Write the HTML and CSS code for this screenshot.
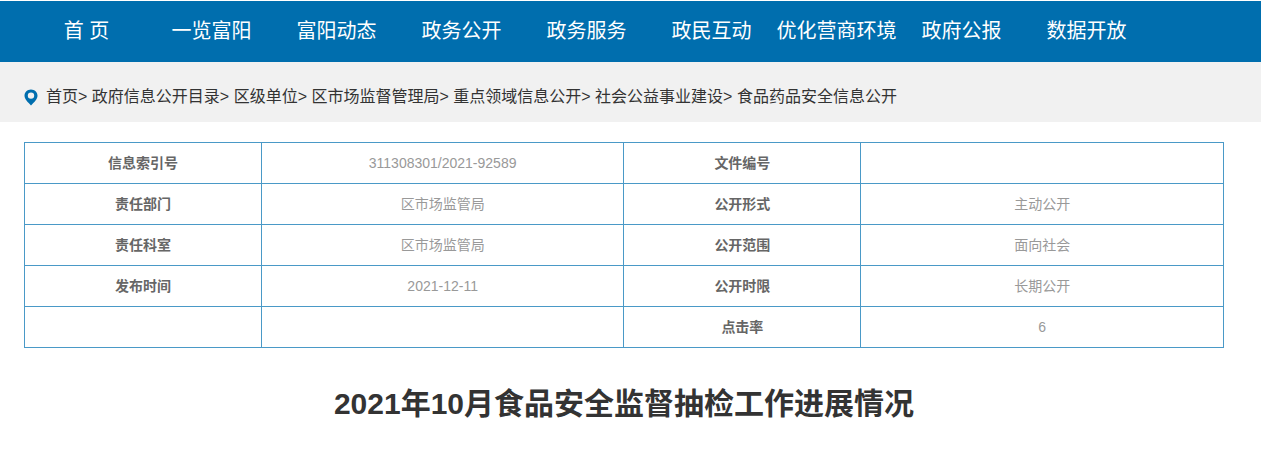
FILE: index.html
```html
<!DOCTYPE html>
<html lang="zh-CN">
<head>
<meta charset="UTF-8">
<meta name="viewport" content="width=device-width, initial-scale=1.0">
<title>2021年10月食品安全监督抽检工作进展情况</title>
<link rel="stylesheet" href="styles.css">
</head>
<body>

<nav class="nav">
  <ul class="nav-list">
    <li><a href="#">首 页</a></li>
    <li><a href="#">一览富阳</a></li>
    <li><a href="#">富阳动态</a></li>
    <li><a href="#">政务公开</a></li>
    <li><a href="#">政务服务</a></li>
    <li><a href="#">政民互动</a></li>
    <li><a href="#">优化营商环境</a></li>
    <li><a href="#">政府公报</a></li>
    <li><a href="#">数据开放</a></li>
  </ul>
</nav>

<div class="position">
  <svg class="pin" viewBox="0 0 14 17" width="14" height="17" aria-hidden="true">
    <path fill-rule="evenodd" d="M7 0.5C3.3 0.5 0.5 3.3 0.5 6.8C0.5 10.4 4 13.2 7 16.6C10 13.2 13.5 10.4 13.5 6.8C13.5 3.3 10.7 0.5 7 0.5ZM7 3.4A3.2 3.2 0 1 1 7 9.8A3.2 3.2 0 1 1 7 3.4Z"/>
  </svg>
  <div class="crumbs">
    <a href="#">首页</a>&gt;
    <a href="#">政府信息公开目录</a>&gt;
    <a href="#">区级单位</a>&gt;
    <a href="#">区市场监督管理局</a>&gt;
    <a href="#">重点领域信息公开</a>&gt;
    <a href="#">社会公益事业建设</a>&gt;
    <a href="#">食品药品安全信息公开</a>
  </div>
</div>

<main class="content">
  <table class="info">
    <colgroup>
      <col class="col-name"><col class="col-value">
      <col class="col-name"><col class="col-value">
    </colgroup>
    <tbody>
      <tr>
        <th scope="row">信息索引号</th><td>311308301/2021-92589</td>
        <th scope="row">文件编号</th><td></td>
      </tr>
      <tr>
        <th scope="row">责任部门</th><td>区市场监管局</td>
        <th scope="row">公开形式</th><td>主动公开</td>
      </tr>
      <tr>
        <th scope="row">责任科室</th><td>区市场监管局</td>
        <th scope="row">公开范围</th><td>面向社会</td>
      </tr>
      <tr>
        <th scope="row">发布时间</th><td>2021-12-11</td>
        <th scope="row">公开时限</th><td>长期公开</td>
      </tr>
      <tr>
        <td></td><td></td>
        <th scope="row">点击率</th><td>6</td>
      </tr>
    </tbody>
  </table>

  <h1 class="title">2021年10月食品安全监督抽检工作进展情况</h1>
</main>

</body>
</html>
```

FILE: styles.css
```css
* {
  box-sizing: border-box;
}

body {
  margin: 0;
  font-family: "Liberation Sans", Arial, "Noto Sans CJK SC", sans-serif;
  color: #333;
  background: #fff;
}

a {
  color: inherit;
  text-decoration: none;
}

.nav {
  margin-top: 1px;
  padding: 0 24px;
  background: #006eae;
}

.nav-list {
  display: flex;
  margin: 0;
  padding: 0;
  list-style: none;
}

.nav-list li {
  flex: 0 0 125px;
}

.nav-list a {
  display: block;
  font-size: 20px;
  line-height: 61px;
  text-align: center;
  white-space: nowrap;
  color: #fff;
}

.position {
  display: flex;
  align-items: center;
  gap: 8px;
  padding: 10px 24px 0;
  background: #f1f1f1;
}

.pin {
  flex: none;
  fill: #006eae;
}

.crumbs {
  font-size: 16px;
  line-height: 50px;
}

.content {
  padding: 20px 37px 0 24px;
}

.info {
  width: 100%;
  table-layout: fixed;
  border-collapse: collapse;
  font-size: 14px;
  line-height: 20px;
  text-align: center;
}

.col-name {
  width: 19.75%;
}

.col-value {
  width: 30.25%;
}

.info th,
.info td {
  height: 41px;
  padding: 10px;
  border: 1px solid #4a99c7;
}

.info th {
  color: #666;
}

.info td {
  color: #999;
}

.title {
  margin: 36px 0 0;
  font-size: 30px;
  line-height: 40px;
  text-align: center;
}
```
